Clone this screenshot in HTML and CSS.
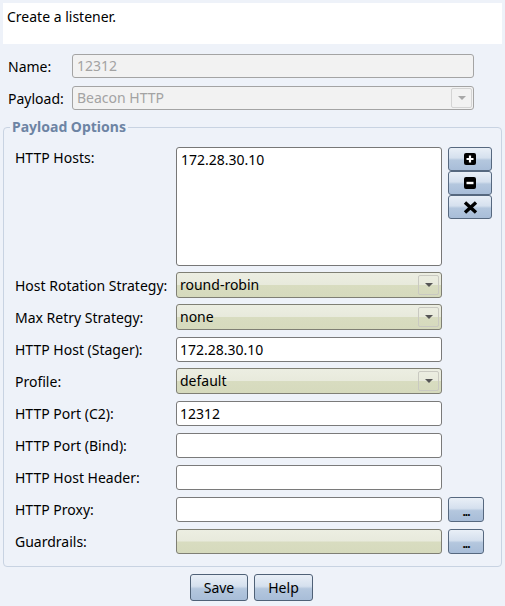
FILE: index.html
```html
<!DOCTYPE html>
<html>
<head>
<meta charset="utf-8">
<link rel="stylesheet" href="styles.css">
</head>
<body>
<div class="header">Create a listener.</div>
<div class="top-form">
  <div class="row">
    <label class="lbl">Name:</label>
    <div class="field disabled">12312</div>
  </div>
  <div class="row">
    <label class="lbl">Payload:</label>
    <div class="field disabled combo-dis">
      <span>Beacon HTTP</span>
      <span class="arrow-box dis"><span class="tri"></span></span>
    </div>
  </div>
</div>
<fieldset class="options">
  <legend>Payload Options</legend>
  <div class="grid">
    <div class="lbl hosts-lbl">HTTP Hosts:</div>
    <div class="textarea">172.28.30.10</div>
    <div class="btn-stack">
      <button class="btn icon-btn"><svg width="12" height="12" viewBox="0 0 12 12"><rect x="0" y="0" width="12" height="12" rx="2" fill="#000"/><path d="M6 2.5v7M2.5 6h7" stroke="#fff" stroke-width="2.2"/></svg></button>
      <button class="btn icon-btn"><svg width="12" height="12" viewBox="0 0 12 12"><rect x="0" y="0" width="12" height="12" rx="2" fill="#000"/><path d="M2.5 6h7" stroke="#fff" stroke-width="2.4"/></svg></button>
      <button class="btn icon-btn"><svg width="15" height="13" viewBox="0 0 15 13"><path d="M2 1.5l11 10M13 1.5L2 11.5" stroke="#000" stroke-width="3.4" stroke-linecap="butt"/></svg></button>
    </div>

    <div class="lbl">Host Rotation Strategy:</div>
    <div class="combo"><span>round-robin</span><span class="arrow-box"><span class="tri"></span></span></div>
    <div></div>

    <div class="lbl">Max Retry Strategy:</div>
    <div class="combo"><span>none</span><span class="arrow-box"><span class="tri"></span></span></div>
    <div></div>

    <div class="lbl">HTTP Host (Stager):</div>
    <div class="input">172.28.30.10</div>
    <div></div>

    <div class="lbl">Profile:</div>
    <div class="combo"><span>default</span><span class="arrow-box"><span class="tri"></span></span></div>
    <div></div>

    <div class="lbl">HTTP Port (C2):</div>
    <div class="input">12312</div>
    <div></div>

    <div class="lbl">HTTP Port (Bind):</div>
    <div class="input"></div>
    <div></div>

    <div class="lbl">HTTP Host Header:</div>
    <div class="input"></div>
    <div></div>

    <div class="lbl">HTTP Proxy:</div>
    <div class="input"></div>
    <button class="btn dots">...</button>

    <div class="lbl">Guardrails:</div>
    <div class="combo guard"></div>
    <button class="btn dots">...</button>
  </div>
</fieldset>
<div class="actions">
  <button class="btn action">Save</button>
  <button class="btn action">Help</button>
</div>
</body>
</html>
```
FILE: styles.css
```css
* { box-sizing: border-box; }
html, body { margin: 0; padding: 0; }
body {
  width: 505px;
  height: 606px;
  background: #eef2f9;
  font-family: "Noto Sans", "Liberation Sans", sans-serif;
  font-size: 14px;
  color: #000;
  overflow: hidden;
}
.header {
  margin: 3px 3px 0 3px;
  height: 41px;
  background: #fff;
  padding: 4px 4px;
  line-height: 20px;
}
.top-form {
  padding: 10px 0 0 8px;
  display: flex;
  flex-direction: column;
  gap: 8px;
}
.row {
  display: flex;
  align-items: center;
  height: 24px;
}
.row .lbl { width: 64px; }
.field {
  width: 402px;
  height: 24px;
  border: 1px solid #a4a4a4;
  border-radius: 3px;
  padding: 0 4px;
  line-height: 22px;
}
.disabled {
  background: #f2f2f2;
  color: #a3a3a3;
}
.combo-dis {
  display: flex;
  justify-content: space-between;
  align-items: center;
  padding-right: 1px;
}
.arrow-box {
  width: 21px;
  height: 20px;
  border: 1px solid #c9c9c1;
  border-radius: 2px;
  display: flex;
  align-items: center;
  justify-content: center;
}
.arrow-box.dis { border-color: #d4d4d4; }
.tri {
  width: 0; height: 0;
  border-left: 4px solid transparent;
  border-right: 4px solid transparent;
  border-top: 4px solid #555;
}
.arrow-box.dis .tri { border-top-color: #a8a8a8; }
.options {
  margin: 8px 3px 0 3px;
  width: 499px;
  height: 449px;
  border: 1px solid #c8d3e2;
  border-radius: 4px;
  padding: 0 0 0 11px;
}
.options legend {
  color: #6d84a4;
  font-weight: bold;
  padding: 0 2px;
  margin-left: -5px;
  line-height: 18px;
}
.grid {
  display: grid;
  grid-template-columns: 155px 266px 44px;
  grid-template-rows: 119px repeat(9, 26px);
  column-gap: 6px;
  row-gap: 6px;
  margin-top: 11px;
  align-items: center;
}
.lbl { white-space: nowrap; }
.hosts-lbl { align-self: start; padding-top: 1px; }
.textarea {
  height: 119px;
  background: #fff;
  border: 1px solid #777;
  border-radius: 3px;
  padding: 1px 4px;
  line-height: 22px;
  align-self: stretch;
}
.btn-stack {
  align-self: start;
  display: flex;
  flex-direction: column;
}
.btn {
  font-family: inherit;
  font-size: 14px;
  color: #000;
  border: 1px solid #56687f;
  border-radius: 3px;
  background: linear-gradient(#e9eff7 0%, #d5e0ee 45%, #b4c7de 55%, #a8bdd8 100%);
  padding: 0;
  display: flex;
  align-items: center;
  justify-content: center;
}
.icon-btn {
  width: 44px;
  height: 24px;
}
.combo {
  height: 26px;
  border: 1px solid #7f7f74;
  border-radius: 3px;
  background: linear-gradient(#eceee2 0%, #e8eadc 48%, #d8dcc0 52%, #d6dabd 100%);
  display: flex;
  align-items: center;
  justify-content: space-between;
  padding: 0 2px 0 3px;
  line-height: 22px;
}
.combo.guard { height: 25px; }
.input {
  height: 25px;
  background: #fff;
  border: 1px solid #7a7a7a;
  border-radius: 3px;
  padding: 0 3px;
  line-height: 23px;
}
.dots {
  width: 36px;
  height: 25px;
  font-size: 12px;
  font-weight: bold;
  line-height: 1;
  padding-top: 6px;
  letter-spacing: -1px;
}
.actions {
  display: flex;
  justify-content: center;
  gap: 6px;
  margin-top: 7px;
  padding-right: 2px;
}
.action {
  width: 58px;
  height: 27px;
  border-color: #4f6177;
}
.action:last-child { width: 59px; }
```
